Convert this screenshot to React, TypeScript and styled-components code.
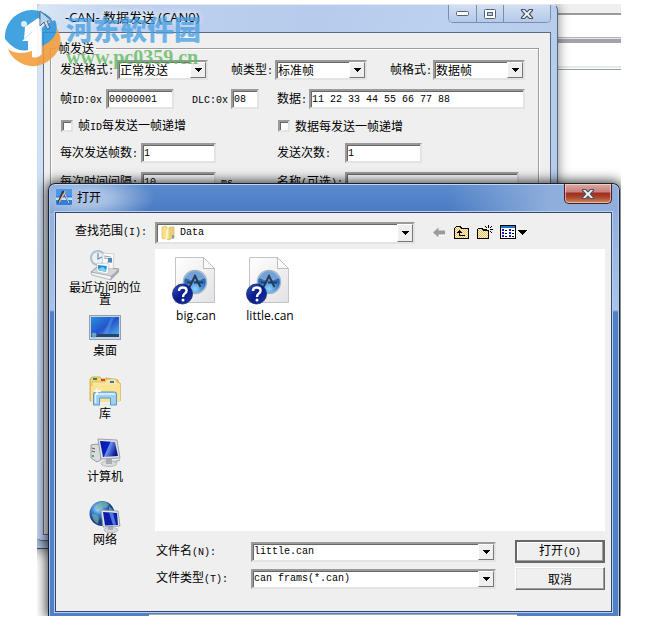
import React from "react";
import styled, { createGlobalStyle, css } from "styled-components";

const HAN = `"Noto Sans CJK SC", sans-serif`;
const MONO = `"Liberation Mono", "Noto Sans CJK SC", monospace`;

const Global = createGlobalStyle`
  *, *::before, *::after { box-sizing: border-box; }
  body { margin: 0; background: #fff; color: #000; font: 12px/16px ${HAN}; }
  button, input, select { font: inherit; color: inherit; margin: 0; border-radius: 0; }
  svg { display: block; flex: none; }
`;

const Desktop = styled.main`
  display: grid;
  position: relative;
  margin: 4px 39px 9px 37px;
  & > * { grid-area: 1 / 1; min-width: 0; }
`;

const Stage = styled.div`
  display: grid;
  overflow: hidden;
  & > * { grid-area: 1 / 1; min-width: 0; }
`;

const Backdrop = styled.div`
  background: linear-gradient(
    #efefef 0 9px, #9a9a9a 9px 11px, #fff 11px 33px, #b4b4b4 33px 34px,
    #e4e4e8 34px 35px, #a3a3ab 35px 39px, #fff 39px 62px, #e2ece4 62px 64px,
    #fff 64px 65px, #9a9a9a 65px 66px, #fff 66px
  );
`;

const UnderWindow = styled.div`
  margin: 200px 65px 67px -8px;
  border: 1px solid #3f5270;
  background: #b5cbea;
  box-shadow: 0 0 14px rgba(0, 0, 0, 0.6);
`;

const Window = styled.section`
  display: flex;
  flex-direction: column;
  margin: 0 63px 75px 0;
  padding: 0 6px 5px 5px;
  border: 1px solid #55657c;
  border-left-color: #c9dcf5;
  border-top-color: #dfe8f4;
  border-radius: 5px 6px 4px 5px;
  background: linear-gradient(100deg, #dbe7f7 0, #bdd0ee 90px, #b6ccec 280px, #bcd1f0 400px, #b4caea 100%);
  box-shadow: 0 0 12px rgba(0, 0, 0, 0.5);
`;

const WindowTitle = styled.header`
  display: flex;
  align-items: flex-start;
  height: 27px;
  padding-left: 22px;
  h1 {
    flex: 1;
    margin: 0;
    padding-top: 4px;
    font: 400 13px/16px "Open Sans", ${HAN};
    text-shadow: 0 0 6px #fff, 0 0 8px #fff;
  }
`;

const CaptionButtons = styled.div`
  display: flex;
  height: 18px;
  border: 1px solid #7b8ea9;
  border-top: 0;
  border-radius: 0 0 5px 5px;
  overflow: hidden;
`;

const CaptionButton = styled.button<{ $wide?: boolean }>`
  display: grid;
  place-items: center;
  width: ${(p) => (p.$wide ? 47 : 27)}px;
  padding: 0;
  border: 0;
  background: linear-gradient(#d2dff3, #b4c9e8);
  & + & { border-left: 1px solid #7b8ea9; }
`;

const WindowBody = styled.div`
  flex: 1;
  padding: 7px 11px 6px 6px;
  border: 1px solid #5b6b84;
  background: #efefef;
`;

const Group = styled.fieldset`
  min-width: 0;
  height: 100%;
  margin: 0;
  padding: 0 13px 0 9px;
  border: 1px solid #9d9d9d;
  box-shadow: inset 1px 1px #fff, 1px 1px #fff;
  legend { margin-left: -4px; padding: 0 2px; line-height: 16px; }
`;

const Rows = styled.div`
  display: flex;
  flex-direction: column;
  gap: 9px;
  padding-top: 4px;
`;

const Row = styled.div<{ $gap?: number; $short?: boolean }>`
  display: flex;
  align-items: center;
  justify-content: space-between;
  gap: ${(p) => p.$gap ?? 0}px;
  height: ${(p) => (p.$short ? 16 : 20)}px;
`;

const Field = styled.label<{ $width?: number }>`
  display: flex;
  align-items: center;
  min-width: 0;
  flex: ${(p) => (p.$width ? `0 0 ${p.$width}px` : "1")};
  white-space: nowrap;
`;

const LabelText = styled.span<{ $width: number }>`
  flex: 0 0 ${(p) => p.$width}px;
`;

const Latin = styled.span`
  font: 10px/16px ${MONO};
`;

const sunken = css`
  border: 2px solid;
  border-color: #9a9a9a #e3e3e3 #e3e3e3 #9a9a9a;
  background: #fff;
  box-shadow: inset 1px 1px #686868;
`;

const TextBox = styled.input<{ $width?: number }>`
  ${sunken}
  ${(p) => (p.$width ? `flex: 0 0 ${p.$width}px; width: ${p.$width}px;` : "flex: 1; width: 100%;")}
  min-width: 0;
  height: 20px;
  padding: 0 1px;
  font: 10px/16px ${MONO};
  outline: 0;
`;

const CheckBox = styled.input`
  ${sunken}
  appearance: none;
  width: 12px;
  height: 12px;
  margin: 0 5px 0 1px;
`;

const Note = styled.span`
  margin-left: 5px;
`;

const ComboBox = styled.div<{ $tall?: boolean }>`
  ${sunken}
  position: relative;
  display: flex;
  align-items: center;
  flex: 1;
  min-width: 0;
  height: ${(p) => (p.$tall ? 22 : 20)}px;
  select, input {
    flex: 1;
    width: 100%;
    min-width: 0;
    height: 16px;
    padding: 0 17px 0 1px;
    border: 0;
    outline: 0;
    appearance: none;
    background: transparent;
  }
`;

const MonoSelect = styled.select`
  font: 10px/16px ${MONO};
`;
const MonoInput = styled.input`
  font: 10px/16px ${MONO};
`;

const Drop = styled.span`
  position: absolute;
  inset: 0 0 0 auto;
  display: grid;
  place-items: center;
  width: 16px;
  border: 1px solid;
  border-color: #fff #777 #777 #fff;
  background: #efefef;
  pointer-events: none;
`;

const Dialog = styled.section`
  align-self: start;
  margin: 179px 1px 0 11px;
  padding: 0 7px 0 6px;
  border: 1px solid #19222f;
  border-bottom: 0;
  border-radius: 7px 7px 0 0;
  background:
    radial-gradient(ellipse 70px 26px at 36px 14px, #a9c2e4 30%, rgba(120, 160, 212, 0) 100%),
    linear-gradient(90deg, rgba(143, 178, 224, 0.5), rgba(79, 127, 197, 0) 14% 70%, #8faedb 88%) 0 0 / 100% 29px no-repeat,
    linear-gradient(#5b8bce 0, #4a7ac2 29px, #8fb0de 29px, #a9c3e8 126px, #4f80c8 128px);
  box-shadow: inset 0 1px #c3d6ef, inset 1px 0 #a9c6ee, inset -1px 0 #a9c6ee, 0 0 12px 2px rgba(0, 0, 0, 0.75);
`;

const DialogTitle = styled.header`
  display: flex;
  align-items: flex-start;
  height: 28px;
  h2 {
    flex: 1;
    margin: 0;
    padding: 5px 0 0 5px;
    font: 400 12px/16px ${HAN};
  }
  & > svg { margin-top: 5px; margin-left: 1px; }
`;

const CloseButton = styled.button`
  display: grid;
  place-items: center;
  width: 48px;
  height: 20px;
  padding: 0;
  border: 1px solid #4d1c20;
  border-top: 0;
  border-radius: 0 0 5px 5px;
  background: linear-gradient(#dfa9a3 0, #c9807a 8px, #9f2d20 9px, #a8432a 13px, #c78058 18px);
  box-shadow: inset 0 0 0 1px rgba(255, 235, 230, 0.55);
`;

const DialogBody = styled.div`
  display: grid;
  grid-template-columns: 98px 1fr;
  padding: 9px 6px 21px 1px;
  border: 1px solid #33466c;
  background: #efefef;
  box-shadow: 0 0 0 1px #b9d0ee;
`;

const LookIn = styled.label`
  padding-left: 18px;
  line-height: 16px;
  white-space: nowrap;
`;

const LookInRow = styled.div`
  display: flex;
  align-items: center;
  gap: 16px;
  margin-bottom: 5px;
  padding-right: 77px;
  svg + select { padding-left: 5px; }
`;

const FolderCombo = styled(ComboBox)`
  flex: 1;
  padding-left: 4px;
`;

const ToolBar = styled.div`
  display: flex;
  align-items: center;
  gap: 7px;
`;

const ToolButton = styled.button`
  display: grid;
  place-items: center;
  height: 20px;
  padding: 0 0 2px;
  border: 0;
  background: none;
`;

const Places = styled.nav`
  display: flex;
  flex-direction: column;
  grid-row: 2 / 4;
`;

const Place = styled.a`
  display: flex;
  flex-direction: column;
  align-items: center;
  min-height: 63px;
  padding: 0 12px 0 10px;
  color: inherit;
  line-height: 12px;
  text-align: center;
  text-decoration: none;
`;

const Files = styled.ul`
  display: flex;
  align-items: flex-start;
  min-height: 282px;
  margin: 0;
  padding: 7px 4px;
  background: #fff;
  list-style: none;
`;

const FileButton = styled.button`
  display: flex;
  flex-direction: column;
  align-items: center;
  width: 74px;
  padding: 0;
  border: 0;
  background: none;
  font: 12px/22px "Open Sans", sans-serif;
`;

const Footer = styled.form`
  display: grid;
  grid-template-columns: 95px 1fr 90px;
  gap: 4px 0;
  align-items: center;
  margin-top: 9px;
  padding-left: 1px;
  & > ${ComboBox} { margin-right: 19px; }
`;

const PushButton = styled.button<{ $main?: boolean }>`
  height: 23px;
  padding: 0;
  border: ${(p) => (p.$main ? "2px solid #686868" : "1px solid")};
  border-color: ${(p) => (p.$main ? "#686868" : "#fff #686868 #686868 #fff")};
  background: #efefef;
  box-shadow: inset -1px -1px #9d9d9d, inset 1px 1px ${(p) => (p.$main ? "#fff" : "#e3e3e3")};
  line-height: 16px;
`;

const Sill = styled.div`
  height: 2px;
  margin: 2px 95px 0 94px;
  border-top: 1px solid #a5a9b0;
  background: #fff;
`;

const Watermark = styled.div`
  position: absolute;
  left: -33px;
  top: 4px;
  display: flex;
  gap: 4px;
  pointer-events: none;
  opacity: 0.86;
`;

const WatermarkText = styled.div`
  padding-top: 5px;
  opacity: 0.9;
  strong { display: block; color: #4aa0e2; font: 900 27px/32px ${HAN}; }
  span { display: block; color: #5cb85c; font: 700 20px/24px "Liberation Serif", serif; }
`;

function Mixed({ text }: { text: string }) {
  return (
    <>
      {text.split(/([\x20-\x7e]+)/).map((part, i) =>
        /^[\x20-\x7e]+$/.test(part) ? <Latin key={i}>{part}</Latin> : part
      )}
    </>
  );
}

const Arrow = () => (
  <svg width="7" height="4" viewBox="0 0 7 4" shapeRendering="crispEdges" aria-hidden="true">
    <path d="M0 0h7v1H6v1H5v1H4v1H3V3H2V2H1V1H0z" />
  </svg>
);

function Combo({ value, label }: { value: string; label: string }) {
  return (
    <ComboBox>
      <select aria-label={label}><option>{value}</option></select>
      <Drop><Arrow /></Drop>
    </ComboBox>
  );
}

const CloseGlyph = () => (
  <svg width="14" height="12" viewBox="0 0 14 12" aria-hidden="true">
    <path d="M1.500 1.500h3.200L7 3.800l2.300-2.300h3.200v1L9.300 6l3.200 3.500v1H9.300L7 8.200l-2.300 2.300H1.500v-1L4.700 6 1.500 2.500z" fill="#f4f6f9" stroke="#4d5668" strokeWidth="1.2" />
  </svg>
);

const AppMark = () => (
  <svg width="16" height="16" viewBox="0 0 16 16" aria-hidden="true">
    <rect width="16" height="16" rx="1.500" fill="#2f7fe0" />
    <rect width="16" height="7" fill="#4b96ea" />
    <rect y="8.500" width="16" height="2.500" fill="#cfe0f2" />
    <path d="M7 2 2 14M7 2l6 12" stroke="#23344c" strokeWidth="1.600" fill="none" />
    <path d="M9.500 2 3 13.500" stroke="#e5b15c" strokeWidth="1.400" />
    <path d="M8.500 4.500 13 14" stroke="#e8edf4" strokeWidth="1" />
  </svg>
);

const Folder = () => (
  <svg width="14" height="16" viewBox="0 0 14 16" aria-hidden="true">
    <path d="M1 2l4-1 1 1v11l-4 1-1-1z" fill="#f6e08c" stroke="#d8b656" strokeWidth=".6" />
    <path d="M5 5l4-3h4v11l-6 2-2-2z" fill="#ecd079" stroke="#d6b257" strokeWidth=".6" />
    <path d="M4.500 5l3-2v10l-3 2z" fill="#fff3b5" />
    <path d="M11 10h2v3l-2 1z" fill="#7f9fb8" />
  </svg>
);

const BackIcon = () => (
  <svg width="15" height="15" viewBox="0 0 15 15" aria-hidden="true">
    <path d="M3 8.500 8 4v3h6v4H8v3z" fill="#fff" />
    <path d="M2 7.500 7.500 2.500v3H14v4H7.500v3z" fill="#9b9b9b" />
  </svg>
);

const Checks = ({ id }: { id: string }) => (
  <defs>
    <pattern id={id} width="2" height="2" patternUnits="userSpaceOnUse">
      <rect width="2" height="2" fill="#fff3cf" />
      <path d="M0 0h1v1H0zM1 1h1v1H1z" fill="#e8c064" />
    </pattern>
  </defs>
);

const UpIcon = () => (
  <svg width="16" height="15" viewBox="0 0 16 15" shapeRendering="crispEdges" aria-hidden="true">
    <Checks id="up" />
    <path d="M1.500 13.500v-10l2-2h4l1 2h7v10z" fill="url(#up)" stroke="#000" />
    <path d="M6.500 6v5M6 10.500h6" stroke="#000" fill="none" />
    <path d="M6 5h1v1h1v1h1v1H4V7h1V6h1z" />
  </svg>
);

const NewIcon = () => (
  <svg width="17" height="16" viewBox="0 0 17 16" shapeRendering="crispEdges" aria-hidden="true">
    <Checks id="new" />
    <path d="M1.500 14.500v-9l1-1h4l1 2h5v8z" fill="url(#new)" stroke="#000" />
    <path d="M12 1h1v3h-1zM12 7h1v3h-1zM8 5h3v1H8zM14 5h3v1h-3zM9 2h1v1H9zM10 3h1v1h-1zM14 3h1v1h-1zM15 2h1v1h-1zM14 7h1v1h-1zM15 8h1v1h-1z" />
  </svg>
);

const ViewIcon = () => (
  <svg width="28" height="15" viewBox="0 0 28 15" shapeRendering="crispEdges" aria-hidden="true">
    <path d="M0 0h16v14H0z" />
    <path d="M1 3h14v10H1z" fill="#fff" />
    <path d="M1 1h14v2H1z" fill="#1e73d8" />
    <path d="M2 4h2v2H2zM2 7h2v2H2zM2 10h2v2H2zM9 4h2v2H9zM9 7h2v2H9zM9 10h2v2H9z" fill="#1a1ab8" />
    <path d="M5 5h2v1H5zM5 8h2v1H5zM5 11h2v1H5zM12 5h2v1h-2zM12 8h2v1h-2zM12 11h2v1h-2z" />
    <path d="M18 5h9v1h-1v1h-1v1h-1v1h-1v1h-1V9h-1V8h-1V7h-1V6h-1z" />
  </svg>
);

const RecentIcon = () => (
  <svg width="32" height="32" viewBox="0 0 32 32" aria-hidden="true">
    <path d="M2 23l6-5 22 2-8 10z" fill="#d3d6da" stroke="#8e949b" />
    <path d="M2 23l20 4v4L3 26z" fill="#f2f3f5" stroke="#999fa6" strokeWidth=".7" />
    <path d="M22 27l8-7v3l-8 8z" fill="#a5aab0" />
    <circle cx="9" cy="9" r="7" fill="#eaf2f7" stroke="#b3bec6" strokeWidth="2" />
    <path d="M9 4v6l4-2" stroke="#6d8ba4" strokeWidth="1.200" fill="none" />
    <path d="M14 4l11 1-1 15-11-2z" fill="#fafafa" stroke="#c3c7cb" strokeWidth=".8" />
    <path d="M15 7l7 1M15 9l4 .5M18 13l5 .5" stroke="#a0a6ad" />
    <path d="M19 9h4v4h-4z" fill="#4b86c4" />
    <path d="M8 14l12 1-1 10-11-2z" fill="#fff" stroke="#bcc2c8" strokeWidth=".7" />
    <path d="M9 16l9 1-1 6-8-2z" fill="#278fd8" />
    <path d="M9 20l5-2 3 3v2l-8-2z" fill="#7fd0f0" />
  </svg>
);

const DesktopIcon = () => (
  <svg width="32" height="32" viewBox="0 0 32 32" aria-hidden="true">
    <defs>
      <linearGradient id="desk" x2="1" y2="1">
        <stop stopColor="#2a8ee2" /><stop offset=".5" stopColor="#2454cb" /><stop offset="1" stopColor="#57b8ef" />
      </linearGradient>
    </defs>
    <rect x=".5" y="3.500" width="31" height="24" fill="#c8d3e0" stroke="#8fa0b4" />
    <rect x="2" y="5" width="28" height="20" fill="url(#desk)" />
    <path d="M14 22 22 6l3-1-6 17z" fill="#5b9cf0" opacity=".5" />
    <rect x="2" y="22" width="28" height="3" fill="#27466e" />
    <circle cx="5" cy="23" r="2.500" fill="#46a6e8" /><circle cx="4.500" cy="22.500" r="1" fill="#f08a36" />
  </svg>
);

const LibraryIcon = () => (
  <svg width="32" height="32" viewBox="0 0 32 32" aria-hidden="true">
    <path d="M1 4l2-2h8l2 2h4V3l12 2v3h2v18H1z" fill="#f4d679" stroke="#c99d3d" strokeWidth=".8" />
    <path d="M3 7h13l2-3h9l1 3 3 1v18H3z" fill="#fae69c" stroke="#d3a94b" strokeWidth=".6" />
    <path d="M2 11h14l2-2h13v18H2z" fill="#fbe391" />
    <path d="M4 3h4v2H4z" fill="#2d8b57" /><path d="M12 4h4v2h-4z" fill="#c34733" /><path d="M21 6h4v2h-4z" fill="#2f77c4" />
    <path d="M4.500 30V19q0-2 2-2h19q2 0 2 2v11h-6v-7h-11v7z" fill="#9fd0f1" stroke="#5796c5" />
    <path d="M6.500 28v-8q0-1 1-1h17q1 0 1 1" stroke="#dff2ff" strokeWidth="1.300" fill="none" />
    <path d="M8 13v7M5 16h7" stroke="#fff" strokeWidth="1.500" />
  </svg>
);

const ComputerIcon = () => (
  <svg width="32" height="32" viewBox="0 0 32 32" aria-hidden="true">
    <defs>
      <linearGradient id="pc" x2="1" y2=".4">
        <stop stopColor="#0715a0" /><stop offset=".5" stopColor="#0b22c0" /><stop offset=".55" stopColor="#6c93f1" /><stop offset="1" stopColor="#0c1b90" />
      </linearGradient>
    </defs>
    <path d="M2 7l6-1 4 2v14l-4 2-6-4z" fill="#d9dcdf" stroke="#84898f" strokeWidth=".8" />
    <path d="M3 10l3 1M3 13l3 1" stroke="#555" /><path d="M3 17h2v2H3z" fill="#4cab50" />
    <ellipse cx="20" cy="25.500" rx="8" ry="3" fill="#d9dcdf" stroke="#999" strokeWidth=".6" />
    <path d="M17 21h6v5h-6z" fill="#a9adb2" />
    <path d="M9 1l19 1 3 18-19 1z" fill="#dfe2e6" stroke="#8a9096" strokeWidth=".8" />
    <path d="M11 3l15 1 3 14-15 1z" fill="url(#pc)" />
    <path d="M25 24l6-2" stroke="#b0b5ba" strokeWidth="1.500" />
  </svg>
);

const NetworkIcon = () => (
  <svg width="32" height="32" viewBox="0 0 32 32" aria-hidden="true">
    <defs>
      <radialGradient id="globe" cx=".35" cy=".3"><stop stopColor="#bfe8ff" /><stop offset=".5" stopColor="#3a87d4" /><stop offset="1" stopColor="#153f92" /></radialGradient>
    </defs>
    <circle cx="13" cy="12.500" r="12.500" fill="url(#globe)" />
    <path d="M10 1q7-2 10 3l-3 3-4-1-2 3-4-1zM3 13q6 0 7 4l-1 6q-6-3-6-10zM20 5l4 4-4 1z" fill="#79b0a0" opacity=".7" />
    <ellipse cx="22" cy="29" rx="7" ry="2.500" fill="#d9dcdf" stroke="#999" strokeWidth=".6" />
    <path d="M19 25h5v4h-5z" fill="#a9adb2" />
    <path d="M12 9l17 1 2 15-17 1z" fill="#e3e6ea" stroke="#8a9096" strokeWidth=".8" />
    <path d="M14 11l14 1 1 12-13 .5z" fill="#0a1ea6" /><path d="M20 11.500l4 .3 3 12h-3z" fill="#6c93f1" opacity=".75" />
  </svg>
);

const FileIcon = () => (
  <svg width="48" height="49" viewBox="0 0 48 49" aria-hidden="true">
    <defs>
      <linearGradient id="paper" x2="1" y2="1"><stop stopColor="#fff" /><stop offset="1" stopColor="#e2e2e4" /></linearGradient>
      <radialGradient id="orb" cx=".5" cy=".8"><stop stopColor="#8fd2ff" /><stop offset="1" stopColor="#2467b8" /></radialGradient>
      <linearGradient id="help" y2="1"><stop stopColor="#3454c8" /><stop offset=".5" stopColor="#0a1a88" /><stop offset="1" stopColor="#1b3aa8" /></linearGradient>
    </defs>
    <path d="M3.500 1.500h28l11 11v34h-39z" fill="url(#paper)" stroke="#c4c4c6" />
    <path d="M31.500 1.500v11h11z" fill="#fafafa" stroke="#bdbdc0" />
    <circle cx="23" cy="26" r="11.500" fill="url(#orb)" stroke="#9fb3ca" strokeWidth="1.500" />
    <path d="M12.500 22a11 10 0 0 1 21 0q-10 5-21 0z" fill="#c6dcf4" opacity=".5" />
    <path d="M23.500 19l-6 12M22.500 19l6 12M15 26.500h4M22 26.500h9" stroke="#263a5a" strokeWidth="2" fill="none" />
    <circle cx="10.500" cy="38" r="10" fill="url(#help)" stroke="#15256e" strokeWidth=".8" />
    <path d="M7 35q0-3.500 3.800-3.500t3.800 3q0 1.800-1.800 3T11 41" fill="none" stroke="#fff" strokeWidth="2.400" />
    <circle cx="11" cy="44" r="1.500" fill="#fff" />
  </svg>
);

const SiteLogo = () => (
  <svg width="58" height="62" viewBox="0 0 58 62" aria-hidden="true">
    <path d="M1 31A27 27 0 0 1 48 11L36 17 18 33l6 0v9Q12 45 1 31z" fill="#2494dc" />
    <path d="M21 19 34 10l3 2v35q-7 4-9 2V24l-8 7z" fill="#fff" />
    <path d="M4 41q9 7 24 2V49q6 2 10-3V35q9-7 13-18 13 19-4 34-17 14-35 1-6-5-8-11z" fill="#f39a35" />
    <path d="M42 16l9-4q4 8-1 17-5 6-12 9V20z" fill="#2494dc" />
    <circle cx="20" cy="16" r="3" fill="#fff" opacity=".8" />
    <path d="M36 3v15l4-4 3 7 3-1-3-7h5z" fill="#e6eef8" fillOpacity=".7" stroke="#45566b" strokeWidth="1" />
  </svg>
);

const places = [
  { name: "最近访问的位置", icon: <RecentIcon /> },
  { name: "桌面", icon: <DesktopIcon /> },
  { name: "库", icon: <LibraryIcon /> },
  { name: "计算机", icon: <ComputerIcon /> },
  { name: "网络", icon: <NetworkIcon /> },
];

const formats = [
  { label: "发送格式:", value: "正常发送", width: 148, text: 57 },
  { label: "帧类型:", value: "标准帧", width: 136, text: 44 },
  { label: "帧格式:", value: "数据帧", width: 135, text: 43 },
];

export default function App() {
  return (
    <>
      <Global />
      <Desktop>
        <Stage>
          <Backdrop />
          <UnderWindow />
          <Window>
            <WindowTitle>
              <h1>-CAN- 数据发送 (CAN0)</h1>
              <CaptionButtons>
                <CaptionButton aria-label="最小化">
                  <svg width="13" height="6" viewBox="0 0 13 6"><rect x=".5" y=".5" width="12" height="4" rx="1" fill="#fff" stroke="#566275" /></svg>
                </CaptionButton>
                <CaptionButton aria-label="最大化">
                  <svg width="12" height="10" viewBox="0 0 12 10"><rect x=".5" y=".5" width="11" height="9" rx="1" fill="#fff" stroke="#566275" /><rect x="3.500" y="3.500" width="5" height="3" fill="#b9cbe6" stroke="#566275" /></svg>
                </CaptionButton>
                <CaptionButton $wide aria-label="关闭"><CloseGlyph /></CaptionButton>
              </CaptionButtons>
            </WindowTitle>
            <WindowBody>
              <Group>
                <legend>帧发送</legend>
                <Rows>
                  <Row>
                    {formats.map((f) => (
                      <Field key={f.label} $width={f.width}>
                        <LabelText $width={f.text}><Mixed text={f.label} /></LabelText>
                        <Combo value={f.value} label={f.label} />
                      </Field>
                    ))}
                  </Row>
                  <Row $gap={18}>
                    <Field $width={114}><LabelText $width={46}><Mixed text="帧ID:0x" /></LabelText><TextBox defaultValue="00000001" /></Field>
                    <Field $width={67}><LabelText $width={39}><Mixed text="DLC:0x" /></LabelText><TextBox defaultValue="08" /></Field>
                    <Field><LabelText $width={32}><Mixed text="数据:" /></LabelText><TextBox defaultValue="11 22 33 44 55 66 77 88" /></Field>
                  </Row>
                  <Row $short>
                    <Field $width={217}><CheckBox type="checkbox" /><span><Mixed text="帧ID每发送一帧递增" /></span></Field>
                    <Field><CheckBox type="checkbox" /><span>数据每发送一帧递增</span></Field>
                  </Row>
                  <Row>
                    <Field $width={217}><LabelText $width={81}><Mixed text="每次发送帧数:" /></LabelText><TextBox $width={75} defaultValue="1" /></Field>
                    <Field><LabelText $width={68}><Mixed text="发送次数:" /></LabelText><TextBox $width={77} defaultValue="1" /></Field>
                  </Row>
                  <Row>
                    <Field $width={217}><LabelText $width={81}><Mixed text="每次时间间隔:" /></LabelText><TextBox $width={75} defaultValue="10" /><Note><Mixed text="ms" /></Note></Field>
                    <Field><LabelText $width={68}><Mixed text="名称(可选):" /></LabelText><TextBox $width={174} /></Field>
                  </Row>
                </Rows>
              </Group>
            </WindowBody>
          </Window>

          <Dialog role="dialog" aria-label="打开">
            <DialogTitle>
              <AppMark />
              <h2>打开</h2>
              <CloseButton aria-label="关闭"><CloseGlyph /></CloseButton>
            </DialogTitle>
            <DialogBody>
              <LookIn htmlFor="look-in"><Mixed text="查找范围(I):" /></LookIn>
              <LookInRow>
                <FolderCombo $tall>
                  <Folder />
                  <MonoSelect id="look-in"><option>Data</option></MonoSelect>
                  <Drop><Arrow /></Drop>
                </FolderCombo>
                <ToolBar>
                  <ToolButton aria-label="后退"><BackIcon /></ToolButton>
                  <ToolButton aria-label="向上一级"><UpIcon /></ToolButton>
                  <ToolButton aria-label="新建文件夹"><NewIcon /></ToolButton>
                  <ToolButton aria-label="查看"><ViewIcon /></ToolButton>
                </ToolBar>
              </LookInRow>
              <Places>
                {places.map((p) => (
                  <Place key={p.name} href="#">{p.icon}{p.name}</Place>
                ))}
              </Places>
              <Files>
                {["big.can", "little.can"].map((name) => (
                  <li key={name}><FileButton><FileIcon />{name}</FileButton></li>
                ))}
              </Files>
              <Footer onSubmit={(e) => e.preventDefault()}>
                <label htmlFor="file-name"><Mixed text="文件名(N):" /></label>
                <ComboBox>
                  <MonoInput id="file-name" defaultValue="little.can" />
                  <Drop><Arrow /></Drop>
                </ComboBox>
                <PushButton $main type="submit"><Mixed text="打开(O)" /></PushButton>
                <label htmlFor="file-type"><Mixed text="文件类型(T):" /></label>
                <ComboBox>
                  <MonoSelect id="file-type"><option>can frams(*.can)</option></MonoSelect>
                  <Drop><Arrow /></Drop>
                </ComboBox>
                <PushButton type="button">取消</PushButton>
              </Footer>
            </DialogBody>
            <Sill />
          </Dialog>
        </Stage>
        <Watermark>
          <SiteLogo />
          <WatermarkText>
            <strong>河东软件园</strong>
            <span>www.pc0359.cn</span>
          </WatermarkText>
        </Watermark>
      </Desktop>
    </>
  );
}
